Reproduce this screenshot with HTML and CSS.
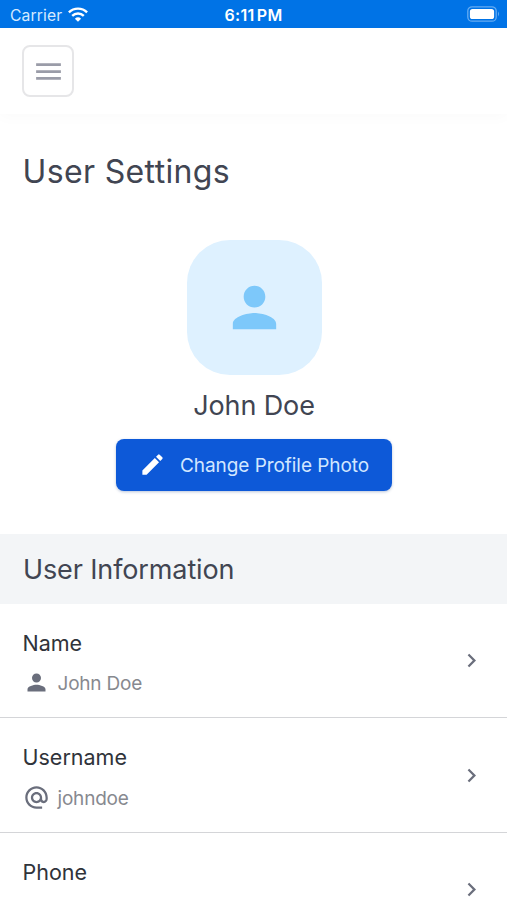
FILE: index.html
```html
<!DOCTYPE html>
<html lang="en">
<head>
<meta charset="utf-8">
<title>User Settings</title>
<link rel="stylesheet" href="styles.css">
</head>
<body>
<div class="status">
  <div class="carrier"><span>Carrier</span>
    <svg width="20" height="15" viewBox="0 0 20 15" fill="none" stroke="#fff" stroke-width="2.4"><path class="arcs" d="M.9 5.3a13 13 0 0 1 18.2 0M4.2 8.8a8.3 8.3 0 0 1 11.6 0"/><path d="M6.9 11.7a4.6 4.6 0 0 1 6.200 0L10 14.800z" fill="#fff" stroke="none"/></svg>
  </div>
  <span class="time">6:11 PM</span>
  <svg class="battery" width="34" height="16" viewBox="0 0 34 16"><rect x=".8" y=".8" width="28.4" height="14.4" rx="4.3" fill="none" stroke="#65acf2" stroke-width="1.3"/><rect x="2.900" y="3" width="24.200" height="10" rx="2.600" fill="#fff"/><path d="M31 5.600q2 2.400 0 4.800z" fill="#65acf2"/></svg>
</div>
<header class="bar">
  <button class="menu" aria-label="Menu"><svg width="33" height="33" viewBox="0 0 24 24"><path d="M3 18h18v-2H3zm0-5h18v-2H3zm0-7v2h18V6z"/></svg></button>
</header>
<main>
  <h1>User Settings</h1>
  <section class="profile">
    <div class="avatar"><svg width="65" height="65" viewBox="0 0 24 24"><path d="M12 12c2.210 0 4-1.790 4-4s-1.790-4-4-4-4 1.790-4 4 1.790 4 4 4zm0 2c-2.670 0-8 1.340-8 4v2h16v-2c0-2.660-5.330-4-8-4z"/></svg></div>
    <div class="person">John Doe</div>
    <button class="change"><svg width="27" height="27" viewBox="0 0 24 24"><path d="M3 17.250V21h3.750L17.810 9.940l-3.750-3.750zM20.710 7.040a1 1 0 0 0 0-1.410l-2.340-2.340a1 1 0 0 0-1.410 0l-1.830 1.830 3.750 3.750z"/></svg><span>Change Profile Photo</span></button>
  </section>
  <h2>User Information</h2>
  <div class="row first">
    <div class="field"><div class="label">Name</div>
      <div class="value"><svg width="27" height="27" viewBox="0 0 24 24"><path d="M12 12c2.210 0 4-1.790 4-4s-1.790-4-4-4-4 1.790-4 4 1.790 4 4 4zm0 2c-2.670 0-8 1.340-8 4v2h16v-2c0-2.660-5.330-4-8-4z"/></svg><span>John Doe</span></div></div>
    <svg class="chevron" width="27" height="27" viewBox="0 0 24 24"><path d="M8.590 16.590 13.170 12 8.590 7.410 10 6l6 6-6 6z"/></svg>
  </div>
  <div class="row">
    <div class="field"><div class="label">Username</div>
      <div class="value"><svg width="27" height="27" viewBox="0 0 24 24"><path d="M12 2C6.480 2 2 6.480 2 12s4.480 10 10 10h5v-2h-5c-4.340 0-8-3.660-8-8s3.660-8 8-8 8 3.660 8 8v1.430c0 .79-.71 1.570-1.500 1.570s-1.500-.78-1.500-1.570V12c0-2.760-2.240-5-5-5s-5 2.240-5 5 2.240 5 5 5c1.380 0 2.640-.56 3.540-1.470.65.89 1.770 1.470 2.960 1.470 1.970 0 3.500-1.600 3.500-3.570V12c0-5.520-4.480-10-10-10zm0 13c-1.660 0-3-1.340-3-3s1.340-3 3-3 3 1.340 3 3-1.340 3-3 3z"/></svg><span>johndoe</span></div></div>
    <svg class="chevron" width="27" height="27" viewBox="0 0 24 24"><path d="M8.590 16.590 13.170 12 8.590 7.410 10 6l6 6-6 6z"/></svg>
  </div>
  <div class="row last">
    <div class="label">Phone</div>
    <svg class="chevron" width="27" height="27" viewBox="0 0 24 24"><path d="M8.590 16.590 13.170 12 8.590 7.410 10 6l6 6-6 6z"/></svg>
  </div>
</main>
</body>
</html>
```
FILE: styles.css
```css
* { box-sizing: border-box; }
body { margin: 0; height: 900px; overflow: hidden; background: #fff; font-family: Inter, "Liberation Sans", sans-serif; color: #414552; }
svg { display: block; flex: none; fill: currentColor; }
button { font: inherit; padding: 0; }
.status { display: grid; grid-template-columns: 1fr auto 1fr; align-items: center; height: 28px; padding: 2px 7px 0 10px; background: #0073e6; color: #fff; font-size: 16px; }
.carrier { display: flex; align-items: center; gap: 6px; color: #d5eaff; font-size: 15.7px; letter-spacing: .12px; }
.carrier svg { margin-top: -2px; }
.arcs { fill: none; }
.time { margin-left: -3px; font-weight: 600; font-size: 16px; word-spacing: -2px; letter-spacing: .3px; }
.battery { justify-self: end; margin: -2px -1px 0 0; }
.bar { height: 86px; padding: 17px 22px; box-shadow: 0 3px 14px rgba(0,0,0,.025); }
.menu { display: flex; align-items: center; justify-content: center; width: 52px; height: 52px; border: 2px solid #e6e6e8; border-radius: 8px; background: #fff; color: #9a9ca8; }
main { height: 786px; overflow: hidden; }
h1 { margin: 0; padding: 36px 22.500px 0; height: 126px; font-size: 32px; line-height: 44px; font-weight: 400; letter-spacing: .36px; }
.profile { display: flex; flex-direction: column; align-items: center; height: 294px; padding-left: 1px; }
.avatar { display: flex; align-items: center; justify-content: center; width: 135px; height: 134.500px; border-radius: 43px; background: #def1ff; color: #7dc8fa; }
.person { margin-top: 12.500px; height: 38px; line-height: 38px; font-size: 27px; letter-spacing: -.1px; }
.change { display: flex; align-items: center; gap: 14px; margin-top: 14px; width: 276px; height: 51.500px; padding-left: 23px; border: 0; border-radius: 8px; background: #0d59d8; color: #fff; box-shadow: 0 1px 3px rgba(20,60,130,.3); font-size: 19px; letter-spacing: -.06px; }
.change span { color: #d2e7ff; padding-top: 1px; }
h2 { margin: 0; height: 70px; padding: 0 23px; background: #f3f5f7; font-size: 27px; line-height: 72px; font-weight: 400; letter-spacing: -.12px; }
.row { display: flex; align-items: center; justify-content: space-between; height: 115px; padding: 0 22px 0 22.500px; border-bottom: 1px solid #d4d5d8; }
.first { height: 114px; }
.field { height: 74px; }
.label { height: 38px; line-height: 38px; font-size: 21.500px; color: #30333a; }
.value { display: flex; align-items: center; gap: 8px; height: 42px; font-size: 19px; letter-spacing: -.2px; color: #6a6e7c; }
.value span { color: #87898f; padding-top: 2px; }
.chevron { color: #6a6e7c; }
.last { height: 67px; padding-top: 20px; align-items: flex-start; border: 0; }
.last .chevron { margin-top: 23px; }
```
